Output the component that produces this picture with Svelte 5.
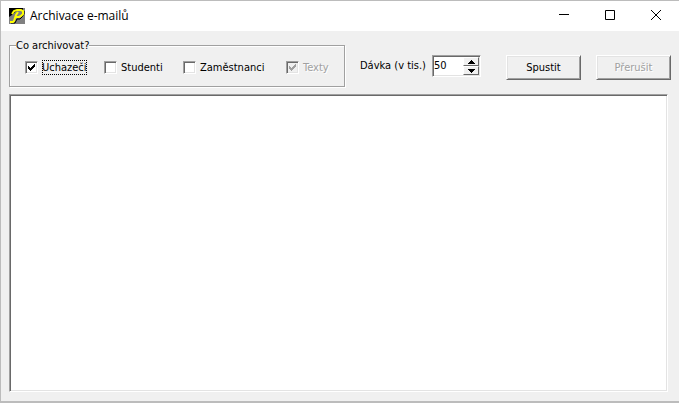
<script lang="ts">
  let sources = $state([
    { id: 'uchazeci', label: 'Uchazeči', checked: true, disabled: false, current: true },
    { id: 'studenti', label: 'Studenti', checked: false, disabled: false, current: false },
    { id: 'zamestnanci', label: 'Zaměstnanci', checked: false, disabled: false, current: false },
    { id: 'texty', label: 'Texty', checked: true, disabled: true, current: false },
  ])

  let batch = $state(50)
  let log = $state('')
  let running = $state(false)

  function step(delta: number) {
    batch = Math.max(1, batch + delta)
  }

  function select(id: string) {
    for (const source of sources) source.current = source.id === id
  }
</script>

<div class="window">
  <header class="titlebar">
    <svg class="logo" width="16" height="16" viewBox="0 0 16 16">
      <rect width="16" height="16" fill="#808080" />
      <path d="M0 0h14v2H9L5 5 3 7 0 9z" fill="#000" />
      <g fill="none" stroke="#000">
        <path d="M15 3v3l-2 3-2 2H8M8 11l-2 4H2" />
      </g>
      <g fill="none" stroke="#ff0" stroke-width="2">
        <path d="M3 6l2-3 3-1h4l2 1v3l-2 2-2 1H7" />
        <path d="M9 4L7 7l-2 6-1 1H1" />
      </g>
    </svg>
    <h1>Archivace e-mailů</h1>
    <div class="captions">
      <button aria-label="Minimalizovat">
        <svg width="10" height="10" viewBox="0 0 10 10"><path d="M0 4.5h10" /></svg>
      </button>
      <button aria-label="Maximalizovat">
        <svg width="10" height="10" viewBox="0 0 10 10"><path d="M.5.5h9v9h-9z" /></svg>
      </button>
      <button aria-label="Zavřít">
        <svg width="10" height="10" viewBox="0 0 10 10"><path d="M0 0l10 10M10 0L0 10" /></svg>
      </button>
    </div>
  </header>

  <main>
    <div class="toolbar">
      <fieldset>
        <legend>Co archivovat?</legend>
        <div class="options">
          {#each sources as source (source.id)}
            <label class:disabled={source.disabled}>
              <span class="box">
                <input
                  type="checkbox"
                  bind:checked={source.checked}
                  disabled={source.disabled}
                  onfocus={() => select(source.id)}
                />
                {#if source.checked}
                  <svg width="7" height="7" viewBox="0 0 7 7" shape-rendering="crispEdges">
                    <path d="M0 2h1v1h1v1h1V3h1V2h1V1h1V0h1v3H6v1H5v1H4v1H3v1H2V6H1V5H0z" />
                  </svg>
                {/if}
              </span>
              <span class="caption" class:current={source.current}>{source.label}</span>
            </label>
          {/each}
        </div>
      </fieldset>

      <div class="batch">
        <label for="batch">Dávka (v tis.)</label>
        <div class="spinner">
          <input id="batch" type="number" min="1" bind:value={batch} />
          <div class="arrows">
            <button aria-label="Zvýšit" onclick={() => step(1)}>
              <svg width="7" height="4" viewBox="0 0 7 4" shape-rendering="crispEdges">
                <path d="M3 0h1v1h1v1h1v1h1v1H0V3h1V2h1V1h1z" />
              </svg>
            </button>
            <button aria-label="Snížit" onclick={() => step(-1)}>
              <svg width="7" height="4" viewBox="0 0 7 4" shape-rendering="crispEdges">
                <path d="M0 0h7v1H6v1H5v1H4v1H3V3H2V2H1V1H0z" />
              </svg>
            </button>
          </div>
        </div>
      </div>

      <div class="actions">
        <button disabled={running} onclick={() => (running = true)}>Spustit</button>
        <button disabled={!running} onclick={() => (running = false)}>Přerušit</button>
      </div>
    </div>

    <textarea class="log" aria-label="Průběh archivace" readonly bind:value={log}></textarea>
  </main>
</div>

<style>
  :global(body) {
    margin: 0;
    background: #bcbcbc;
  }

  .window {
    box-sizing: border-box;
    display: flex;
    flex-direction: column;
    min-height: 100vh;
    border: 1px solid #bcbcbc;
    border-right: none;
    border-bottom-width: 2px;
    background: #f0f0f0;
    color: #000;
    font: 11px/13px "DejaVu Sans Condensed", "Noto Sans", sans-serif;
  }

  button,
  input,
  textarea {
    font: inherit;
    color: inherit;
  }

  .titlebar {
    display: flex;
    align-items: center;
    height: 30px;
    padding-left: 8px;
    background: #fff;
  }

  .logo {
    margin-right: 5px;
  }

  h1 {
    flex: 1;
    margin: 0;
    font: 12px/16px "Open Sans", "Noto Sans", sans-serif;
  }

  .captions {
    display: flex;
    align-self: stretch;
  }

  .captions button {
    display: flex;
    align-items: center;
    justify-content: center;
    width: 46px;
    padding: 0 0 2px;
    border: none;
    background: transparent;
  }

  .captions svg {
    fill: none;
    stroke: #000;
  }

  main {
    display: flex;
    flex: 1;
    flex-direction: column;
    padding: 8px 8px 9px;
  }

  .toolbar {
    display: flex;
    align-items: flex-start;
  }

  fieldset {
    box-sizing: border-box;
    width: 336px;
    height: 48px;
    min-width: 0;
    margin: 0;
    padding: 7px 15px 0;
    border: 1px solid #a0a0a0;
    box-shadow: 1px 1px #fff, inset 1px 1px #fff;
  }

  legend {
    margin-left: -9px;
    padding: 0;
    background: #f0f0f0;
  }

  .options {
    display: grid;
    grid-template-columns: 79px 79px 103px auto;
  }

  .options label {
    display: flex;
    align-items: center;
    gap: 4px;
    height: 17px;
    white-space: nowrap;
  }

  .box {
    display: grid;
    flex: none;
    place-items: center;
  }

  .box input,
  .box svg {
    grid-area: 1 / 1;
  }

  .box svg {
    pointer-events: none;
  }

  .box input {
    appearance: none;
    box-sizing: border-box;
    width: 13px;
    height: 13px;
    margin: 0;
    border: 1px solid;
    border-color: #a0a0a0 #fff #fff #a0a0a0;
    outline: none;
    background: #fff;
    box-shadow: inset 1px 1px #696969, inset -1px -1px #e3e3e3;
  }

  .disabled {
    color: #a0a0a0;
    text-shadow: 1px 1px #fff;
  }

  .disabled svg {
    fill: #a0a0a0;
  }

  .disabled input {
    background: #f0f0f0;
  }

  .caption {
    line-height: 15px;
  }

  .current {
    outline: 1px dotted #000;
    outline-offset: -1px;
  }

  .batch {
    display: flex;
    align-items: flex-start;
    gap: 6px;
    margin: 16px 0 0 15px;
  }

  .batch label {
    width: 66px;
    padding-top: 4px;
    white-space: nowrap;
  }

  .spinner {
    box-sizing: border-box;
    display: flex;
    width: 49px;
    height: 22px;
    padding: 1px;
    border: 1px solid;
    border-color: #a0a0a0 #fff #fff #a0a0a0;
    background: #fff;
    box-shadow: inset 1px 1px #696969, inset -1px -1px #e3e3e3;
  }

  .spinner input {
    appearance: textfield;
    flex: 1;
    min-width: 0;
    padding: 0 0 1px;
    border: none;
    outline: none;
    background: transparent;
  }

  .spinner input::-webkit-inner-spin-button {
    display: none;
  }

  .arrows {
    display: flex;
    flex-direction: column;
    width: 16px;
  }

  .arrows button {
    box-sizing: border-box;
    display: flex;
    flex: 1;
    align-items: center;
    justify-content: center;
    min-height: 0;
    padding: 0;
    border: 1px solid;
    border-color: #fff #696969 #696969 #fff;
    background: #f0f0f0;
  }

  .actions {
    display: flex;
    gap: 15px;
    margin: 16px 0 0 auto;
  }

  .actions button {
    box-sizing: border-box;
    width: 75px;
    height: 25px;
    padding: 0;
    border: 1px solid;
    border-color: #fff #696969 #696969 #fff;
    background: #f0f0f0;
    box-shadow: inset 1px 1px #e3e3e3, inset -1px -1px #a0a0a0;
  }

  .actions button:disabled {
    color: #a0a0a0;
    text-shadow: 1px 1px #fff;
  }

  .log {
    box-sizing: border-box;
    flex: 1;
    min-height: 120px;
    margin: 7px 3px 0 0;
    padding: 3px;
    border: 1px solid;
    border-color: #a0a0a0 #fff #fff #a0a0a0;
    outline: none;
    background: #fff;
    box-shadow: inset 1px 1px #696969, inset -1px -1px #e3e3e3;
    resize: none;
  }
</style>
